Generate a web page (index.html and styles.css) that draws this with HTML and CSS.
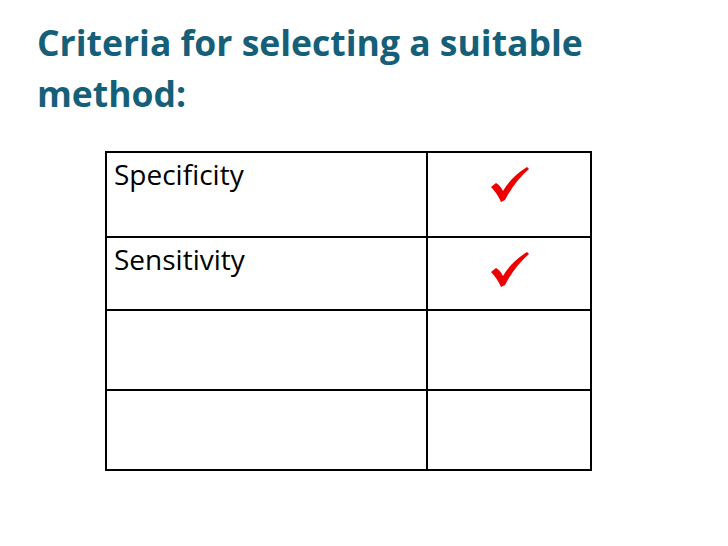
FILE: index.html
```html
<!DOCTYPE html>
<html>
<head>
<meta charset="utf-8">
<link rel="stylesheet" href="styles.css">
</head>
<body>
<div class="slide">
  <h1 class="title">Criteria for selecting a suitable<br>method:</h1>
  <table class="grid">
    <tr class="r1">
      <td class="label">Specificity</td>
      <td class="mark"><svg class="tick" viewBox="0 0 40 36" width="40" height="36"><path d="M2 20 L7 16 Q11 18 14 24 Q22 10 38 0 L40 2 Q26 14 16 33 L12 35 Q8 26 2 20 Z" fill="#ee0000"/></svg></td>
    </tr>
    <tr class="r2">
      <td class="label">Sensitivity</td>
      <td class="mark"><svg class="tick" viewBox="0 0 40 36" width="40" height="36"><path d="M2 20 L7 16 Q11 18 14 24 Q22 10 38 0 L40 2 Q26 14 16 33 L12 35 Q8 26 2 20 Z" fill="#ee0000"/></svg></td>
    </tr>
    <tr class="r3"><td class="label"></td><td class="mark"></td></tr>
    <tr class="r4"><td class="label"></td><td class="mark"></td></tr>
  </table>
</div>
</body>
</html>
```
FILE: styles.css
```css
html, body {
  margin: 0;
  padding: 0;
  background: #fff;
}
.slide {
  width: 728px;
  height: 546px;
  padding: 17px 0 0 37px;
  box-sizing: border-box;
}
.title {
  margin: 0;
  font-family: "Open Sans", "Liberation Sans", sans-serif;
  font-weight: 700;
  font-size: 35.5px;
  line-height: 51px;
  color: #155f78;
}
.grid {
  margin: 32px 0 0 68px;
  border-collapse: collapse;
  font-family: "Open Sans", "Liberation Sans", sans-serif;
  font-size: 28px;
  color: #000;
}
.grid td {
  border: 2px solid #000;
  padding: 0;
  vertical-align: top;
}
.label {
  width: 321px;
  padding: 4px 0 0 7px !important;
  box-sizing: border-box;
  line-height: 34px;
}
.mark {
  width: 164px;
  text-align: center;
  box-sizing: border-box;
}
.tick {
  display: block;
  margin: 14px 0 0 61px;
}
.r1 td { height: 85px; }
.r2 td { height: 73px; }
.r3 td { height: 80px; }
.r4 td { height: 80px; }
```
